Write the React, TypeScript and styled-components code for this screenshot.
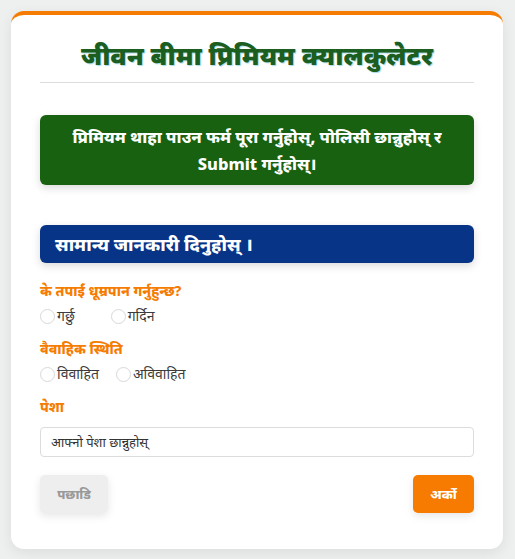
import styled, { createGlobalStyle } from "styled-components";

const GlobalStyle = createGlobalStyle`
  html, body {
    margin: 0;
    padding: 0;
    background: #eef0ef;
    font-family: "Noto Sans", "Liberation Sans", sans-serif;
  }
`;

const App: React.FC = () => {
  return (
    <Page>
      <GlobalStyle />
      <Card>
        <Title>जीवन बीमा प्रिमियम क्यालकुलेटर</Title>
        <Divider />
        <Notice>
          प्रिमियम थाहा पाउन फर्म पूरा गर्नुहोस्, पोलिसी छान्नुहोस् र Submit गर्नुहोस्।
        </Notice>
        <SectionHead>सामान्य जानकारी दिनुहोस् ।</SectionHead>

        <Field>
          <Label>के तपाईं धूम्रपान गर्नुहुन्छ?</Label>
          <RadioRow>
            <RadioItem gap={36}>
              <Radio type="radio" name="smoke" />
              गर्छु
            </RadioItem>
            <RadioItem>
              <Radio type="radio" name="smoke" />
              गर्दिन
            </RadioItem>
          </RadioRow>
        </Field>

        <Field>
          <Label>वैवाहिक स्थिति</Label>
          <RadioRow>
            <RadioItem gap={17}>
              <Radio type="radio" name="married" />
              विवाहित
            </RadioItem>
            <RadioItem>
              <Radio type="radio" name="married" />
              अविवाहित
            </RadioItem>
          </RadioRow>
        </Field>

        <Field>
          <Label>पेशा</Label>
          <Select>आफ्नो पेशा छान्नुहोस्</Select>
        </Field>

        <Actions>
          <Button variant="back">पछाडि</Button>
          <Button variant="next">अर्को</Button>
        </Actions>
      </Card>
    </Page>
  );
};

const Page = styled.div`
  padding: 11px 12px 13px 11px;
`;

const Card = styled.div`
  background: #fff;
  border-top: 4px solid #f57c00;
  border-radius: 13px;
  box-shadow: 0 4px 14px rgba(0, 0, 0, 0.08);
  padding: 19px 29px 36px;
`;

const Title = styled.h1`
  margin: 0;
  text-align: center;
  color: #1b5e20;
  font-size: 26px;
  font-weight: 900;
  line-height: 42px;
  text-shadow: 1px 1px 1px rgba(0, 150, 200, 0.35);
`;

const Divider = styled.hr`
  border: none;
  border-top: 1px solid #dddddd;
  margin: 6px 0 32px;
`;

const Notice = styled.div`
  background: #176110;
  color: #fff;
  border-radius: 6px;
  box-shadow: 0 3px 8px rgba(0, 0, 0, 0.15);
  padding: 8px 10px;
  text-align: center;
  font-size: 16.5px;
  font-weight: 800;
  line-height: 27px;
  margin-bottom: 40px;
`;

const SectionHead = styled.div`
  background: #083487;
  color: #fff;
  border-radius: 6px;
  box-shadow: 0 3px 8px rgba(0, 0, 0, 0.15);
  padding: 0 15px;
  height: 38px;
  display: flex;
  align-items: center;
  font-size: 18px;
  font-weight: 800;
  margin-bottom: 18px;
`;

const Field = styled.div`
  display: flex;
  flex-direction: column;
  margin-bottom: 12px;
`;

const Label = styled.div`
  color: #f57c00;
  font-size: 14px;
  font-weight: 800;
  line-height: 20px;
  margin-bottom: 4px;
`;

const RadioRow = styled.div`
  display: flex;
  align-items: center;
`;

const RadioItem = styled.label<{ gap?: number }>`
  display: flex;
  align-items: center;
  font-size: 14px;
  color: #3a3a3a;
  line-height: 22px;
  margin-right: ${({ gap }) => (gap ? `${gap}px` : "0")};
`;

const Radio = styled.input`
  appearance: none;
  width: 15px;
  height: 15px;
  border: 1px solid #d8d8d8;
  border-radius: 50%;
  margin: 0 2px 0 0;
  background: #fff;
`;

const Select = styled.div`
  margin-top: 6px;
  height: 28px;
  border: 1px solid #dcdcdc;
  border-radius: 4px;
  padding: 0 10px;
  display: flex;
  align-items: center;
  font-size: 13px;
  color: #333;
`;

const Actions = styled.div`
  display: flex;
  justify-content: space-between;
  margin-top: 18px;
`;

const Button = styled.button<{ variant: "back" | "next" }>`
  border: none;
  border-radius: 5px;
  height: 38px;
  font-family: inherit;
  font-size: 13px;
  font-weight: 800;
  cursor: pointer;
  width: ${({ variant }) => (variant === "back" ? "68px" : "61px")};
  background: ${({ variant }) => (variant === "back" ? "#eeeeee" : "#f77b00")};
  color: ${({ variant }) => (variant === "back" ? "#999" : "#fff")};
  box-shadow: 0 3px 8px rgba(0, 0, 0, 0.1);
`;

export default App;
